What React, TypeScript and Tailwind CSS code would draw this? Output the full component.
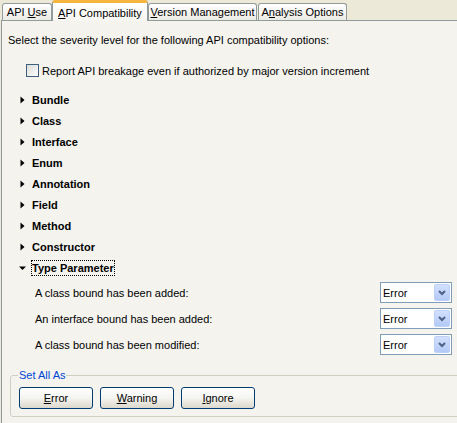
import React from "react";

type Tab = { pre: string; key: string; post: string; width: string; selected?: boolean; extra?: string };

const tabs: Tab[] = [
  { pre: "API ", key: "U", post: "se", width: "w-[50px]", extra: "ml-[2px]" },
  { pre: "", key: "A", post: "PI Compatibility", width: "w-[96px]", selected: true },
  { pre: "", key: "V", post: "ersion Management", width: "w-[109px]" },
  { pre: "A", key: "n", post: "alysis Options", width: "w-[89px]", extra: "ml-[1px]" },
];

const groups = ["Bundle", "Class", "Interface", "Enum", "Annotation", "Field", "Method", "Constructor"];

const options = [
  "A class bound has been added:",
  "An interface bound has been added:",
  "A class bound has been modified:",
];

function TabItem({ t }: { t: Tab }) {
  if (t.selected) {
    return (
      <div
        className={`${t.width} h-[21px] -mb-px relative z-10 flex items-start justify-center pt-[3px] border border-b-0 border-[#919b9c] border-t-[3px] border-t-[#f5b53f] rounded-t-[3px] bg-linear-to-b from-white to-[#f6f5f1] text-black`}
      >
        <span>
          <span className="underline">{t.key}</span>
          {t.post}
        </span>
      </div>
    );
  }
  return (
    <div
      className={`${t.width} ${t.extra ?? ""} h-[17px] flex items-center justify-center border border-b-0 border-[#919b9c] rounded-t-[3px] bg-linear-to-b from-white to-[#ecebe4] text-black`}
    >
      <span>
        {t.pre}
        <span className="underline">{t.key}</span>
        {t.post}
      </span>
    </div>
  );
}

function Arrow({ open }: { open?: boolean }) {
  return (
    <div className="w-[14px] h-[14px] ml-[16px] flex items-center">
      <svg width="14" height="14" viewBox="0 0 14 14">
        {open ? (
          <path d="M1 5.5 L8 5.5 L4.5 9 Z" fill="#000" />
        ) : (
          <path d="M2.5 3.5 L6.5 7 L2.5 10.5 Z" fill="#000" />
        )}
      </svg>
    </div>
  );
}

function Combo() {
  return (
    <div className="w-[72px] h-[21px] mr-[5px] flex items-center border border-[#7f9db9] bg-white">
      <span className="flex-1 pl-[2px] text-[11px] text-black">Error</span>
      <div className="w-[16px] h-[17px] mr-[1px] flex items-center justify-center rounded-[2px] border border-[#bcd0f8] bg-linear-to-b from-[#d3e0fd] to-[#b3c9f7]">
        <svg width="8" height="6" viewBox="0 0 8 6">
          <path d="M1 1 L4 4 L7 1" stroke="#4d6185" strokeWidth="2" fill="none" />
        </svg>
      </div>
    </div>
  );
}

function XpButton({ pre, k, post }: { pre?: string; k: string; post: string }) {
  return (
    <button className="w-[74px] h-[22px] flex items-center justify-center border border-[#003c74] rounded-[3px] bg-linear-to-b from-white via-[#f4f4f0] to-[#dcd8cc] text-[11px] text-black">
      <span>
        {pre}
        <span className="underline">{k}</span>
        {post}
      </span>
    </button>
  );
}

export default function App() {
  return (
    <div className="w-[457px] h-[423px] overflow-hidden bg-[#ece9d8] font-['Liberation_Sans',Arial,sans-serif] text-[11px] leading-[14px] text-black flex flex-col">
      <div className="h-[20px] flex items-end">
        {tabs.map((t) => (
          <TabItem key={t.post} t={t} />
        ))}
      </div>

      <div className="flex-1 ml-px border-l border-t border-[#919b9c] bg-[#f4f3ee] flex flex-col">
        <div className="ml-[6px] mt-[12px] h-[14px]">
          Select the severity level for the following API compatibility options:
        </div>

        <div className="ml-[24px] mt-[13px] h-[21px] flex items-center gap-[3px]">
          <div className="w-[13px] h-[13px] border border-[#3f5f80] bg-linear-to-br from-[#dcdcd7] to-white" />
          <span>Report API breakage even if authorized by major version increment</span>
        </div>

        <div className="mt-[8px] flex flex-col">
          {groups.map((g) => (
            <div key={g} className="h-[21px] flex items-center">
              <Arrow />
              <span className="font-bold">{g}</span>
            </div>
          ))}
          <div className="h-[21px] flex items-center">
            <Arrow open />
            <span className="font-bold border border-dotted border-black -ml-px px-0">Type Parameter</span>
          </div>
        </div>

        <div className="mt-[4px] flex flex-col gap-[5px]">
          {options.map((o) => (
            <div key={o} className="h-[21px] flex items-center justify-between">
              <span className="ml-[33px]">{o}</span>
              <Combo />
            </div>
          ))}
        </div>

        <fieldset className="ml-[8px] mt-[13px] w-[470px] border border-[#d0d0bf] rounded-[3px] px-[8px] pt-[5px] pb-[7px]">
          <legend className="px-px -ml-px text-[#0046d5]">Set All As</legend>
          <div className="flex gap-[7px]">
            <XpButton k="E" post="rror" />
            <XpButton k="W" post="arning" />
            <XpButton k="I" post="gnore" />
          </div>
        </fieldset>
      </div>
    </div>
  );
}
